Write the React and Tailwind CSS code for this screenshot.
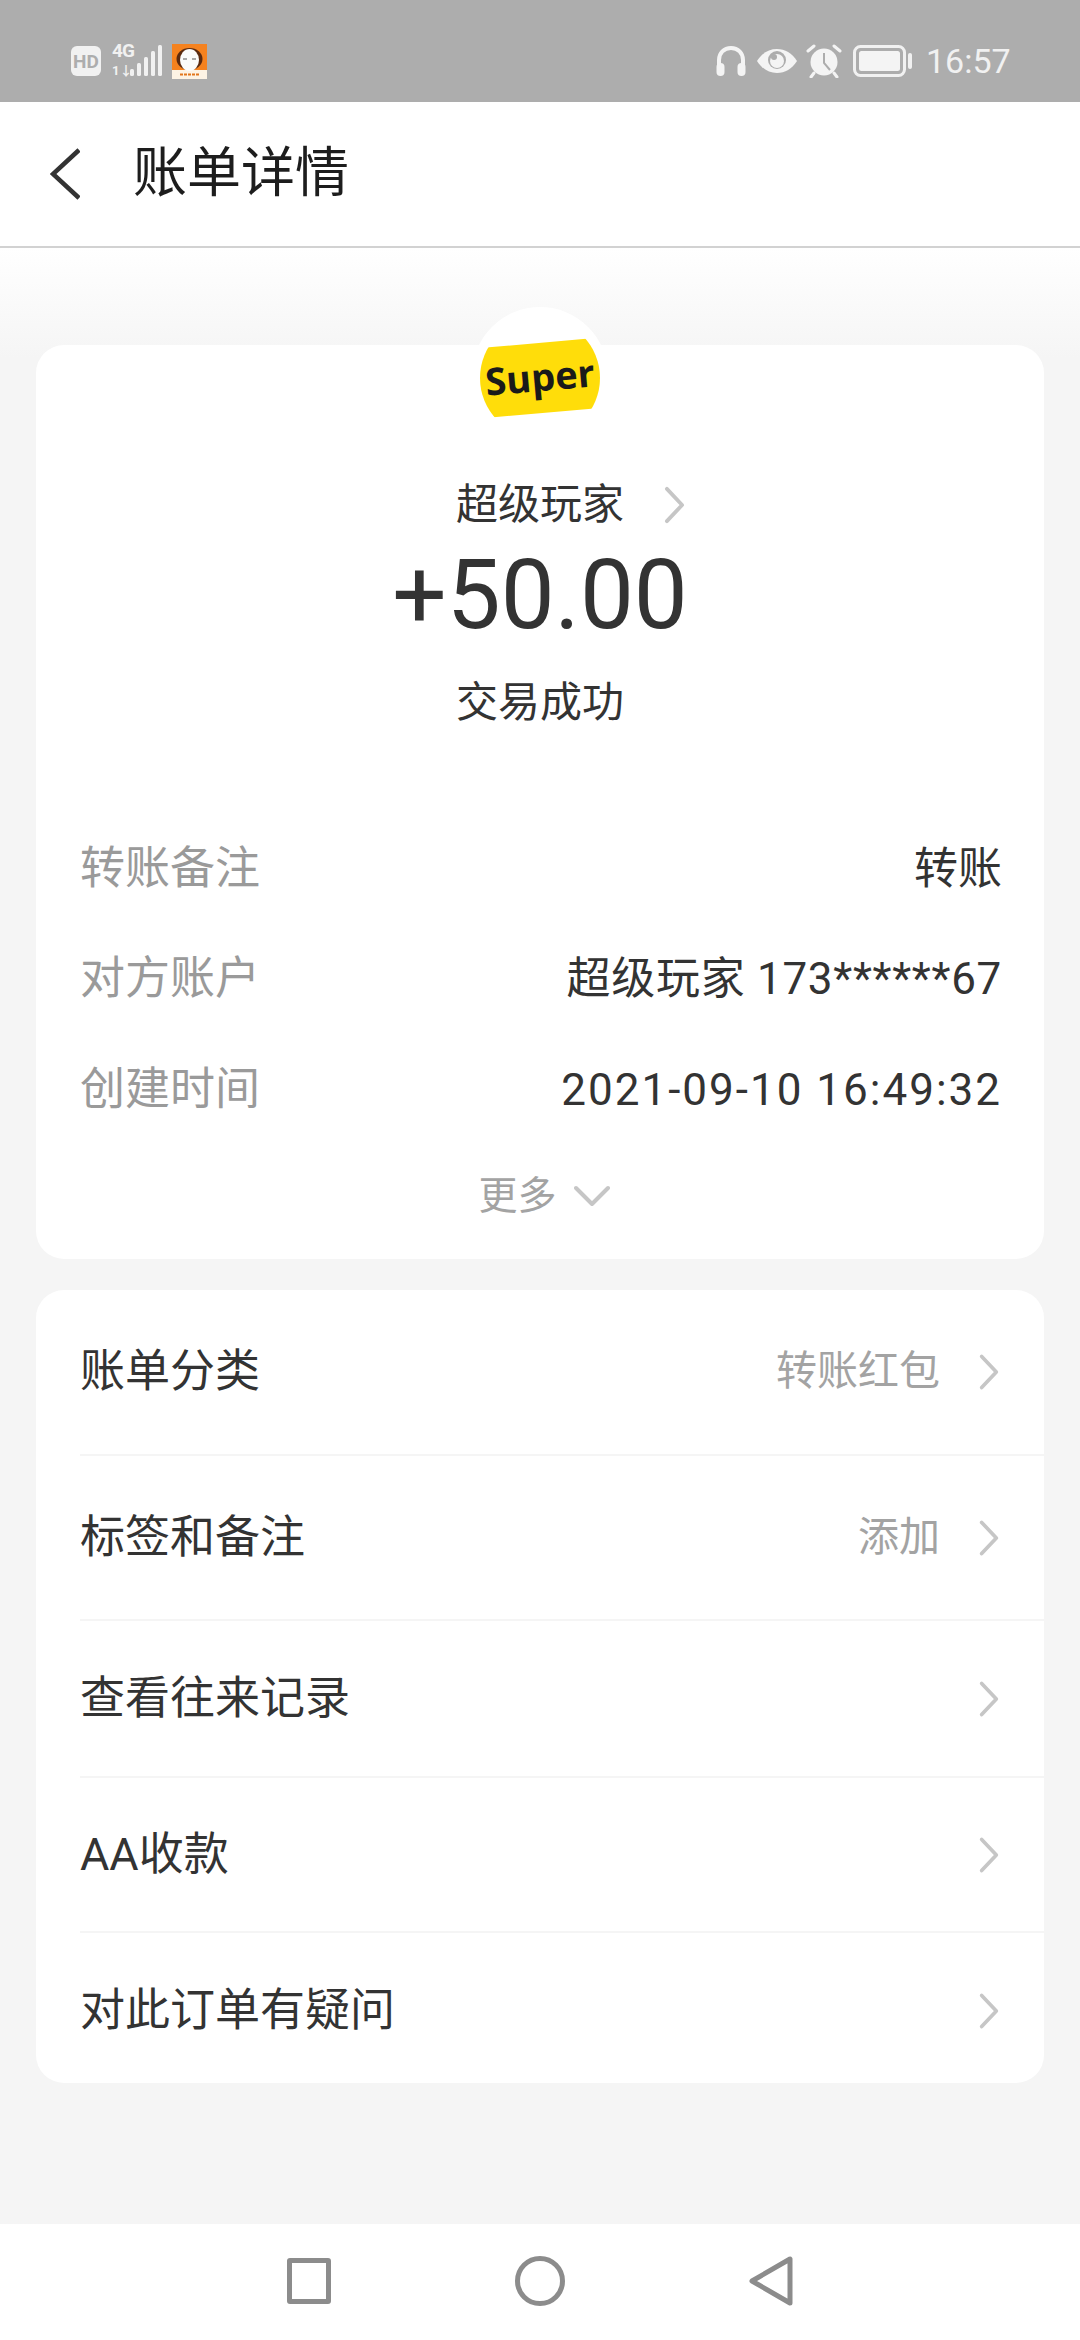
import React from "react";

const FONT = { fontFamily: '"Roboto","Noto Sans CJK SC",sans-serif' };

const Chevron = ({ className = "" }) => (
  <svg className={className} viewBox="0 0 24 40" fill="none" stroke="#c6c6c6" strokeWidth="4" strokeLinecap="round" strokeLinejoin="round">
    <path d="M4 3l16 17L4 37" />
  </svg>
);

const StatusLeft = () => (
  <div className="flex items-center">
    <div className="w-[30px] h-[30px] rounded-[6px] bg-[#f1f1f1] flex items-center justify-center text-[#adadad] text-[19px] font-bold leading-none">HD</div>
    <div className="relative w-[50px] h-[32px] ml-[11px] text-[#f1f1f1]">
      <span className="absolute left-0 top-[-3px] text-[19px] font-bold leading-[18px] tracking-[-1px]">4G</span>
      <span className="absolute left-0 bottom-[-1px] text-[13px] font-bold leading-[14px]">1↓</span>
      <svg className="absolute left-0 top-0" width="50" height="32" viewBox="0 0 50 32" fill="#f1f1f1">
        <rect x="18" y="24" width="4" height="7" rx="1.5" />
        <rect x="25" y="18" width="4" height="13" rx="1.5" />
        <rect x="32" y="12" width="4" height="19" rx="1.5" />
        <rect x="39" y="6" width="4" height="25" rx="1.5" />
        <rect x="46" y="0" width="4" height="31" rx="1.5" />
      </svg>
    </div>
    <svg className="ml-[10px]" width="35" height="35" viewBox="0 0 35 35">
      <rect width="35" height="35" fill="#f5821f" />
      <rect y="26" width="35" height="9" fill="#fdf3e4" />
      <ellipse cx="17.5" cy="15" rx="13" ry="11" fill="#5a2a10" />
      <ellipse cx="17.5" cy="16" rx="9.5" ry="11" fill="#fbfbfb" />
      <path d="M11 15h4M20 15h4" stroke="#555" strokeWidth="1" />
      <path d="M8 30.5h19" stroke="#e2761c" strokeWidth="2" strokeDasharray="3 1" />
    </svg>
  </div>
);

const StatusRight = () => (
  <div className="flex items-center">
    <svg width="30" height="32" viewBox="0 0 30 32" fill="none">
      <path d="M3 20v-5C3 8 8 3 15 3s12 5 12 12v5" stroke="#f4f4f4" strokeWidth="4" />
      <rect x="0.5" y="18" width="8" height="13" rx="4" fill="#f4f4f4" />
      <rect x="21.5" y="18" width="8" height="13" rx="4" fill="#f4f4f4" />
    </svg>
    <svg className="ml-[11px]" width="40" height="26" viewBox="0 0 40 26">
      <path d="M0 13C5 5 12 1 20 1s15 4 20 12c-5 8-12 12-20 12S5 21 0 13z" fill="#f4f4f4" />
      <circle cx="20" cy="12" r="9" fill="#adadad" />
      <circle cx="20" cy="13" r="7" fill="#f4f4f4" />
      <circle cx="17" cy="9" r="3" fill="#adadad" />
    </svg>
    <svg className="ml-[9px]" width="36" height="34" viewBox="0 0 36 34">
      <circle cx="18" cy="18" r="13.5" fill="#f4f4f4" />
      <path d="M18 9v10l6 7" stroke="#adadad" strokeWidth="2" fill="none" />
      <path d="M2 7l6-5M34 7l-6-5M8 29l-3 4M28 29l3 4" stroke="#f4f4f4" strokeWidth="3" strokeLinecap="round" />
    </svg>
    <svg className="ml-[11px]" width="60" height="32" viewBox="0 0 60 32">
      <rect x="1.5" y="1.5" width="50" height="29" rx="6" fill="none" stroke="#f1f1f1" strokeWidth="3" />
      <rect x="6" y="6" width="41" height="20" rx="2.5" fill="#f4f4f4" />
      <rect x="55" y="8" width="4" height="16" rx="2" fill="#f1f1f1" />
    </svg>
    <span className="ml-[13px] w-[82px] text-[34px] leading-none text-[#f1f1f1]">16:57</span>
  </div>
);

const InfoRow = ({ label, value, tracking }) => (
  <div className="h-[110px] flex items-center justify-between">
    <span className="text-[45px] text-[#9a9a9a]">{label}</span>
    <span className={`text-[44px] text-[#333333] mr-[-2px] ${tracking}`}>{value}</span>
  </div>
);

const LinkRow = ({ label, value, className = "", divider = true }) => (
  <div className={`flex items-center pl-[44px] ${className}`}>
    <div className={`flex-1 h-full flex items-center justify-between pr-[44px] ${divider ? "border-b-2 border-[#f5f5f5]" : "pt-[6px]"}`}>
      <span className="text-[45px] text-[#333333]">{label}</span>
      <div className="flex items-center">
        {value && <span className="text-[41px] text-[#a3a3a3] mr-[38px]">{value}</span>}
        <Chevron className="w-[22px] h-[38px]" />
      </div>
    </div>
  </div>
);

export default function App() {
  return (
    <div className="w-[1080px] h-[2340px] flex flex-col overflow-hidden bg-white" style={FONT}>
      <div className="h-[102px] shrink-0 bg-[#adadad] flex items-center justify-between pl-[71px] pr-[72px] pt-[20px]">
        <StatusLeft />
        <StatusRight />
      </div>

      <header className="h-[146px] shrink-0 bg-white border-b-2 border-[#d2d2d2] flex items-center pl-[50px]">
        <svg width="30" height="52" viewBox="0 0 30 52" fill="none" stroke="#333333" strokeWidth="4.5">
          <path d="M29 2L3 26l26 24" />
        </svg>
        <h1 className="ml-[53px] text-[54px] text-[#1d1d1d] leading-none">账单详情</h1>
      </header>

      <main className="flex-1 bg-[linear-gradient(180deg,#ffffff_0,#f5f5f5_110px)] px-[36px] pt-[97px]">
        <section className="relative h-[914px] bg-white rounded-[28px] px-[44px] pt-[130px]">
          <div className="absolute left-[444px] top-[-27px] w-[120px] h-[120px]">
            <div className="absolute left-[-8px] top-[-11px] w-[136px] h-[136px] rounded-full bg-white" />
            <div className="relative w-[120px] h-[120px] rounded-full overflow-hidden">
              <div className="absolute left-[-10px] top-[25px] w-[140px] h-[70px] bg-[#ffdd0a] -rotate-[5deg] flex items-center justify-center pb-[4px]">
                <span className="text-[38px] font-bold text-[#1a1a1a] leading-none" style={{ fontFamily: '"Open Sans",sans-serif' }}>Super</span>
              </div>
            </div>
          </div>

          <div className="h-[60px] flex items-center justify-center">
            <div className="relative text-[42px] leading-none text-[#333333]">
              超级玩家
              <Chevron className="absolute right-[-62px] top-[2px] w-[23px] h-[38px]" />
            </div>
          </div>
          <div className="h-[120px] flex items-center justify-center text-[96px] leading-none text-[#333333]">+50.00</div>
          <div className="mt-[17px] h-[60px] flex items-center justify-center text-[42px] text-[#333333]">交易成功</div>

          <div className="mt-[82px]">
            <InfoRow label="转账备注" value="转账" tracking="tracking-normal" />
            <InfoRow label="对方账户" value="超级玩家 173******67" tracking="tracking-[0.7px]" />
            <div className="mt-[1px]">
              <InfoRow label="创建时间" value="2021-09-10 16:49:32" tracking="tracking-[2px]" />
            </div>
          </div>

          <div className="mt-[21px] h-[60px] flex items-center justify-center text-[39px] text-[#a3a3a3] pl-[8px]">
            更多
            <svg className="ml-[17px]" width="36" height="22" viewBox="0 0 36 22" fill="none" stroke="#c6c6c6" strokeWidth="4" strokeLinecap="round" strokeLinejoin="round">
              <path d="M2 3l16 16L34 3" />
            </svg>
          </div>
        </section>

        <section className="mt-[31px] bg-white rounded-[28px] overflow-hidden">
          <LinkRow label="账单分类" value="转账红包" className="h-[166px]" />
          <LinkRow label="标签和备注" value="添加" className="h-[165px]" />
          <LinkRow label="查看往来记录" className="h-[157px]" />
          <LinkRow label="AA收款" className="h-[155px]" />
          <LinkRow label="对此订单有疑问" className="h-[150px]" divider={false} />
        </section>
      </main>

      <nav className="h-[116px] shrink-0 bg-white flex items-center justify-center gap-[184px] pb-[2px]">
        <div className="w-[44px] h-[46px] border-[5px] border-[#8c8c8c] rounded-[3px]" />
        <div className="w-[50px] h-[50px] border-[5px] border-[#8c8c8c] rounded-full" />
        <svg width="44" height="50" viewBox="0 0 44 50" fill="none" stroke="#8c8c8c" strokeWidth="5" strokeLinejoin="round">
          <path d="M41 3v44L3 25z" />
        </svg>
      </nav>
    </div>
  );
}
